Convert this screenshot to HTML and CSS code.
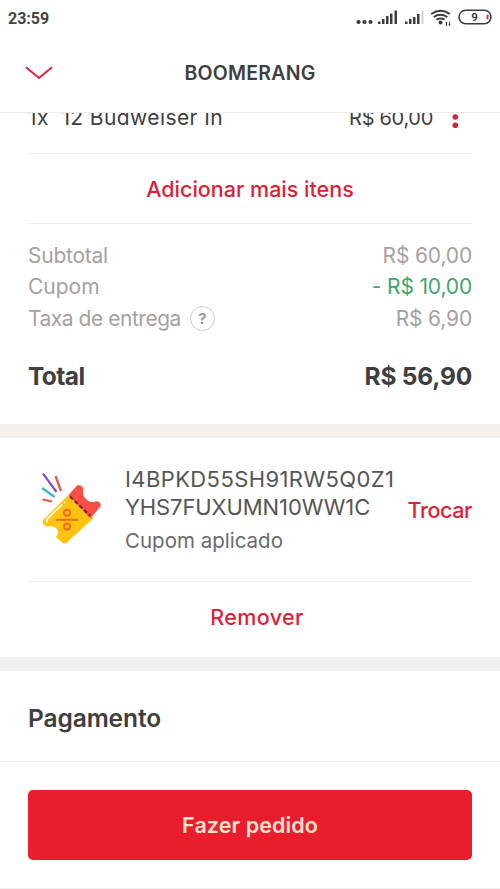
FILE: index.html
```html
<!DOCTYPE html>
<html lang="pt-BR">
<head>
<meta charset="utf-8">
<title>Boomerang</title>
<link rel="stylesheet" href="styles.css">
</head>
<body>
<main class="screen">
  <div class="status">
    <span class="clock">23:59</span>
    <svg class="indicators" width="140" height="28" viewBox="0 0 140 28">
      <g fill="#3c3c3c">
        <circle cx="2.500" cy="22" r="2.100"/><circle cx="8.500" cy="22" r="2.100"/><circle cx="14.500" cy="22" r="2.100"/>
        <path d="M22 24v-2.500h2.500v2.500zM26 24v-5h2.500v5zM30 24v-8h2.500v8zM34 24v-10.500h2.500v10.500zM38.500 24v-13.500h2.500v13.500z"/>
        <path d="M49 24v-2.500h2.500v2.500zM53 24v-5h2.500v5zM57 24v-7h2.500v7zM61 24v-10h2.500v10z"/>
        <path fill="#d2d2d2" d="M65.500 24v-13h2v13z"/>
        <circle cx="84.500" cy="22.500" r="2"/>
        <path d="M90.500 21.500l1.300 1.500h-.8v3h-1v-3h-.8zM93.500 26l-1.300-1.500h.8v-3h1v3h.8z"/>
      </g>
      <g fill="none" stroke="#3c3c3c" stroke-width="2">
        <path d="M75.200 14q9.300-6.500 18.600 0M77.700 17q6.800-4.500 13.600 0M80.500 19.700q4-2.500 8 0"/>
        <rect x="103" y="10.300" width="32" height="13.500" rx="6.700" stroke-width="1.500"/>
      </g>
      <rect x="130.500" y="14.500" width="2" height="5" rx="1" fill="#e8283c"/>
      <text x="118.500" y="21.300" class="charge">9</text>
    </svg>
  </div>
  <header class="header">
    <svg class="chevron" width="28" height="14" viewBox="0 0 28 14"><path d="M1 1.200l13 10.800 13-10.800" fill="none" stroke="#dc1f3c" stroke-width="2"/></svg>
    <h1 class="title">BOOMERANG</h1>
  </header>
  <section class="item">
    <span class="item-name">1x&nbsp; 12 Budweiser In</span>
    <span class="item-price">R$ 60,00</span>
    <svg class="more" width="8" height="26" viewBox="0 0 8 26" fill="#e01e37"><circle cx="4.300" cy="4.500" r="2.800"/><circle cx="4.300" cy="13" r="2.800"/><circle cx="4.300" cy="21.300" r="2.800"/></svg>
  </section>
  <section class="add"><a class="link add-link">Adicionar mais itens</a></section>
  <section class="summary">
    <div class="row"><span class="l-sub">Subtotal</span><span class="v-sub">R$ 60,00</span></div>
    <div class="row"><span class="l-cup">Cupom</span><span class="v-cup">- R$ 10,00</span></div>
    <div class="row"><span class="fee"><span class="l-fee">Taxa de entrega</span><span class="help">?</span></span><span class="v-fee">R$ 6,90</span></div>
    <div class="row total"><span class="l-total">Total</span><span class="v-total">R$ 56,90</span></div>
  </section>
  <section class="coupon">
    <svg class="ticket" width="64" height="74" viewBox="0 0 64 74">
      <path fill="#ffc20e" d="M28.500 22L3.500 46.500Q1.500 49.500 4 52q2.500 3 6 1 5 0 7.500 4 1.500 4-1.500 7l5.500 5q3 3 6 0L53.500 45z"/>
      <path fill="#fb4f45" d="M28.500 22l8.500-9.500q2.500-1.500 5 1 2 2 1 5-.500 4.500 4 8.500 4.500 3.500 8.500 1.500 2-1 4 1 2.500 2.500 0 5L50.500 45.500z"/>
      <path d="M30 23.500l20 19" stroke="#742039" stroke-width="2.200" stroke-dasharray="4 2.500" fill="none"/>
      <path d="M21.700 32L8.500 44.500q-2 2-1.700 4.500" stroke="#fff8d9" stroke-width="1.800" stroke-linecap="round" fill="none"/><circle cx="24.500" cy="29.500" r="1" fill="#fff8d9"/>
      <g stroke="#ef6a24" stroke-width="2" fill="none"><path d="M16 46.800h22"/><circle cx="27" cy="39.800" r="3"/><circle cx="27" cy="53.500" r="3"/></g>
      <g stroke-width="2.200" fill="none"><path stroke="#8054c4" d="M3 .500l13.500 18.500"/><path stroke="#f0504b" d="M15.500 3l5.500 15"/><path stroke="#36b5cf" d="M2 15l12.500 9"/><path stroke="#ee5449" d="M2.500 26.500l9.500 2"/></g>
    </svg>
    <div class="coupon-text">
      <div class="code c1">I4BPKD55SH91RW5Q0Z1</div>
      <div class="code c2">YHS7FUXUMN10WW1C</div>
      <div class="applied">Cupom aplicado</div>
    </div>
    <a class="link swap">Trocar</a>
  </section>
  <section class="remove"><a class="link remove-link">Remover</a></section>
  <section class="payment"><h2 class="pay-title">Pagamento</h2></section>
  <footer class="footer"><button class="order"><span class="order-label">Fazer pedido</span></button></footer>
</main>
</body>
</html>
```
FILE: styles.css
```css
* { box-sizing: border-box; }
body { margin: 0; background: #fff; font-family: Inter, "Liberation Sans", sans-serif; color: #3e3e3e; }
.screen { width: 500px; height: 889px; overflow: hidden; display: flex; flex-direction: column; white-space: nowrap; }
.screen > * { flex: none; }
.status { height: 34px; padding: 0 4px 0 8px; display: flex; justify-content: space-between; }
.clock { font: 700 16px/37px Roboto, sans-serif; color: #444; }
.charge { font: 600 11.5px Roboto, sans-serif; fill: #333; text-anchor: middle; }
.header { height: 79px; border-bottom: 1px solid #ececec; display: grid; grid-template-columns: 60px 1fr 60px; align-items: center; }
.chevron { margin-left: 25px; }
.title { margin: 0; text-align: center; font-size: 19.5px; line-height: 24px; font-weight: 600; letter-spacing: 0.25px; }
.item { height: 41px; margin: 0 28px; overflow: hidden; border-bottom: 1px solid #ececec; display: flex; align-items: flex-start; font-size: 21px; line-height: 26px; }
.item span { margin-top: -8px; }
.item-name { letter-spacing: 0.4px; }
.item .item-price { margin-left: auto; font-size: 20px; letter-spacing: -0.3px; }
.more { margin: -9px 13px 0 18px; }
.add { height: 70px; margin: 0 28px; border-bottom: 1px solid #ececec; display: flex; align-items: center; justify-content: center; }
.link { color: #e01e37; font-size: 21.5px; font-weight: 500; line-height: 28px; }
.summary { height: 214px; padding: 16px 28px 0; border-bottom: 14px solid #f5efeb; }
.row { height: 31.5px; display: flex; align-items: center; justify-content: space-between; font-size: 21px; color: #a4a19f; line-height: 30px; }
.l-sub { letter-spacing: -0.25px; }
.l-fee { letter-spacing: -0.47px; }
.v-sub, .v-cup, .v-fee { letter-spacing: -0.15px; }
.fee { display: flex; align-items: center; gap: 9px; }
.help { width: 25px; height: 25px; border: 1.5px solid #cfcccb; border-radius: 50%; text-align: center; font-size: 15px; line-height: 23px; font-weight: 600; color: #908d8b; }
.v-cup { color: #43a36c; }
.total { margin-top: 25.5px; font-size: 24.5px; font-weight: 700; color: #3e3e3e; }
.l-total { letter-spacing: -0.6px; }
.v-total { letter-spacing: -0.2px; }
.coupon { height: 144px; margin: 0 28px; border-bottom: 1px solid #ececec; display: flex; align-items: flex-start; }
.ticket { margin: 34.5px 0 0 12px; }
.coupon-text { margin: 27px 0 0 21px; width: 270px; }
.code { font-size: 22px; line-height: 28px; color: #555; }
.c1 { letter-spacing: 0.4px; }
.c2 { letter-spacing: -0.1px; }
.applied { font-size: 20.5px; line-height: 28px; margin-top: 6px; color: #6b6b6b; }
.swap { margin: 58px 0 0 auto; letter-spacing: -0.4px; }
.remove { height: 89px; border-bottom: 14px solid #f2efec; display: flex; align-items: flex-start; justify-content: center; padding: 21px 0 0 14px; }
.remove-link { letter-spacing: 0.4px; font-weight: 450; }
.payment { height: 91px; padding: 0 28px; border-bottom: 1px solid #ececec; display: flex; align-items: center; }
.pay-title { margin: 3px 0 0; font-size: 24.5px; line-height: 30px; font-weight: 600; letter-spacing: -0.1px; }
.footer { height: 127px; padding: 28px 28px 0; border-bottom: 1px solid #f0f0f0; }
.order { display: block; width: 444px; height: 70px; border: 0; border-radius: 5px; background: #ea1d2c; color: #ffe1cf; font: 600 21.5px/30px Inter, sans-serif; letter-spacing: 0.1px; }
```
